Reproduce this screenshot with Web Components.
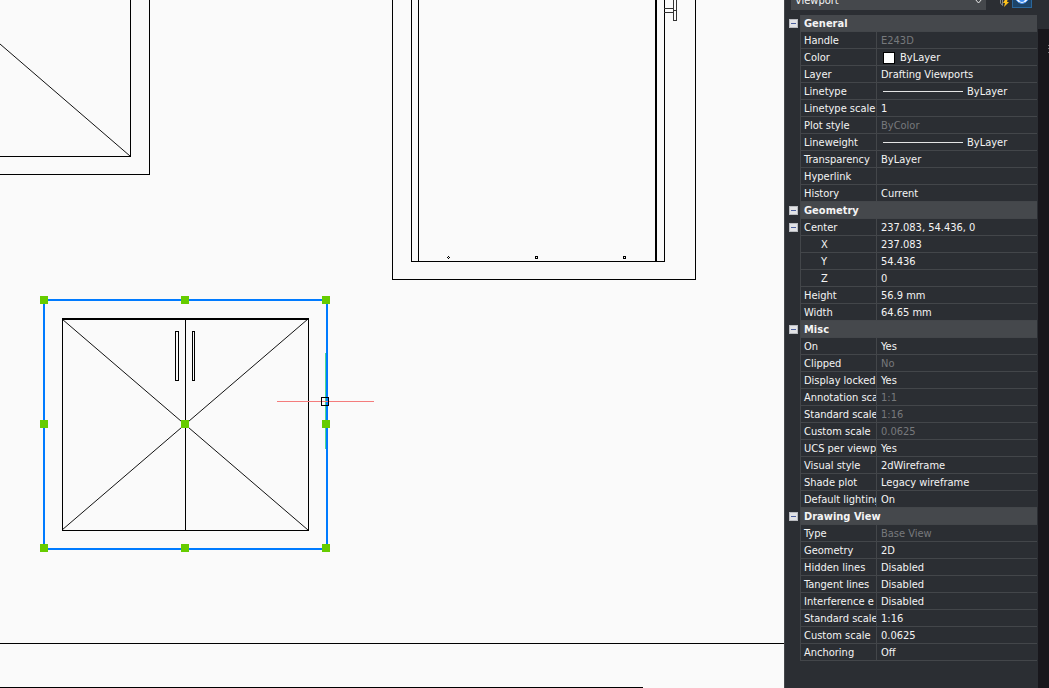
<!DOCTYPE html>
<html lang="en">
<head>
<meta charset="utf-8">
<title>Properties</title>
<style>
    html, body {
        margin: 0;
        height: 100%;
        overflow: hidden;
        background: #18171c;
    }
</style>
</head>
<body>
<cad-app>
    <cad-canvas slot="canvas"></cad-canvas>
    <prop-panel slot="panel">
        <prop-toolbar slot="toolbar"></prop-toolbar>
        <prop-section name="General"></prop-section>
        <prop-section name="Geometry"></prop-section>
        <prop-section name="Misc"></prop-section>
        <prop-section name="Drawing View"></prop-section>
    </prop-panel>
    <side-strip slot="strip"></side-strip>
</cad-app>

<script>
;(() => {
    // rows: [label, value, options]
    const sections = {
        'General': [
            ['Handle', 'E243D', {muted: true}],
            ['Color', 'ByLayer', {swatch: true}],
            ['Layer', 'Drafting Viewports'],
            ['Linetype', 'ByLayer', {line: true}],
            ['Linetype scale', '1'],
            ['Plot style', 'ByColor', {muted: true}],
            ['Lineweight', 'ByLayer', {line: true}],
            ['Transparency', 'ByLayer'],
            ['Hyperlink', ''],
            ['History', 'Current']
        ],
        'Geometry': [
            ['Center', '237.083, 54.436, 0', {toggle: true}],
            ['X', '237.083', {child: true}],
            ['Y', '54.436', {child: true}],
            ['Z', '0', {child: true}],
            ['Height', '56.9 mm'],
            ['Width', '64.65 mm']
        ],
        'Misc': [
            ['On', 'Yes'],
            ['Clipped', 'No', {muted: true}],
            ['Display locked', 'Yes'],
            ['Annotation sca', '1:1', {muted: true}],
            ['Standard scale', '1:16', {muted: true}],
            ['Custom scale', '0.0625', {muted: true}],
            ['UCS per viewp', 'Yes'],
            ['Visual style', '2dWireframe'],
            ['Shade plot', 'Legacy wireframe'],
            ['Default lighting', 'On']
        ],
        'Drawing View': [
            ['Type', 'Base View', {muted: true}],
            ['Geometry', '2D'],
            ['Hidden lines', 'Disabled'],
            ['Tangent lines', 'Disabled'],
            ['Interference e', 'Disabled'],
            ['Standard scale', '1:16'],
            ['Custom scale', '0.0625'],
            ['Anchoring', 'Off']
        ]
    };

    const define = (name, html, init) => {
        const template = document.createElement('template');
        template.innerHTML = html;

        window.customElements.define(name, class extends HTMLElement {
            constructor() {
                super();
                this.attachShadow({ mode: 'open' });
                this.shadowRoot.appendChild(template.content.cloneNode(true));
            }
            connectedCallback() {
                if (init && !this.ready) {
                    this.ready = true;
                    init(this, this.shadowRoot);
                }
            }
        });
    };

    define('cad-app', `
        <style>
            :host {
                display: grid;
                grid-template-columns: minmax(0, 1fr) 254px 11px;
                height: 100vh;
                overflow: hidden;
                font: 11px/15px "DejaVu Sans Condensed", "DejaVu Sans", sans-serif;
                color: #f4f4f4;
                --panel: #2b2e33;
                --line: #43464a;
                --head: #45484c;
                --muted: #77797c;
            }
        </style>
        <slot name="canvas"></slot>
        <slot name="panel"></slot>
        <slot name="strip"></slot>
    `);

    define('cad-canvas', `
        <style>
            :host {
                display: block;
                min-width: 0;
                overflow: hidden;
                background: #fafafa;
            }
            svg {
                display: block;
                width: 100%;
                height: 100%;
            }
            .ink { fill: none; stroke: #000; shape-rendering: crispEdges; }
            .soft { stroke: #333; }
            .diagonal { fill: none; stroke: #111; }
            .selection { fill: none; stroke: #007bff; stroke-width: 2; }
            .grips rect { fill: #66cc00; width: 8px; height: 8px; }
        </style>
        <svg role="img" aria-label="Drawing">
            <!-- window, top left -->
            <path class="ink" d="M130.5 0V156.5H0M149.5 0V174.5H0"/>
            <path class="diagonal" d="M0 44L130 156"/>

            <!-- door -->
            <g class="ink">
                <path d="M392.5 0V279.5H695.5V0"/>
                <path d="M411.5 0V261.5H664.5V0M418.5 0V261"/>
                <path d="M656 0V261" stroke-width="2"/>
                <path class="soft" d="M664 8.5H673M664 12.5H673M673.5 0V20.5H676.5V0M673 10.5H676"/>
                <path d="M447 257.5H448M449 257.5H450M448 256.5H449M448 258.5H449"/>
                <path d="M535.5 256.5H537.5V258.5H535.5ZM623.5 256.5H625.5V258.5H623.5Z"/>
            </g>

            <!-- sheet border -->
            <line class="ink" x1="0" y1="643.5" x2="100%" y2="643.5"/>
            <line class="ink" x1="0" y1="687.5" x2="643" y2="687.5"/>

            <!-- cabinet -->
            <path class="diagonal" d="M62 319L308 530M62 530L308 319"/>
            <g class="ink">
                <path d="M62.5 319V530.5H308.5V319M185.5 319V530"/>
                <path d="M62 319H309" stroke-width="2"/>
                <path d="M175.5 331.5H178.5V380.5H175.5ZM192.5 331.5H194.5V380.5H192.5Z"/>
            </g>

            <rect class="selection" x="44" y="300" width="283" height="249"/>
            <path d="M325.5 353V449" stroke="#4fd98c"/>
            <g class="grips">
                <rect x="40" y="296"/><rect x="181" y="296"/><rect x="322" y="296"/>
                <rect x="40" y="420"/><rect x="181" y="420"/><rect x="322" y="420"/>
                <rect x="40" y="544"/><rect x="181" y="544"/><rect x="322" y="544"/>
            </g>

            <!-- crosshair -->
            <path d="M277 401.5H374" stroke="#f47c7c"/>
            <rect class="ink" x="321.5" y="397.5" width="7" height="8"/>
        </svg>
    `);

    define('prop-panel', `
        <style>
            :host {
                display: flex;
                flex-direction: column;
                box-sizing: border-box;
                min-height: 0;
                overflow: hidden;
                padding-right: 1px;
                border-left: 1px solid #45484c;
                background: var(--panel);
            }
        </style>
        <slot name="toolbar"></slot>
        <slot></slot>
    `);

    define('prop-toolbar', `
        <style>
            :host {
                display: flex;
                align-items: flex-end;
                box-sizing: border-box;
                height: 15px;
                flex: none;
                padding: 0 5px 5px 6px;
                overflow: hidden;
            }
            label {
                display: grid;
                flex: 1;
                align-items: center;
                margin-right: 11px;
            }
            select, label svg { grid-area: 1 / 1; }
            select {
                appearance: none;
                height: 20px;
                padding: 0 4px;
                border: 0;
                border-radius: 0;
                background: #45484c;
                color: inherit;
                font: inherit;
            }
            label svg { justify-self: end; margin-right: 3px; pointer-events: none; }
            button {
                display: flex;
                align-items: flex-end;
                justify-content: flex-end;
                box-sizing: border-box;
                width: 15px;
                height: 20px;
                padding: 0 3px 3px 0;
                border: 0;
                background: none;
            }
            .active {
                justify-content: center;
                width: 20px;
                margin-bottom: 2px;
                padding: 0;
                border: 1px solid #2a679c;
                background: #1d4468;
            }
        </style>
        <label>
            <select aria-label="Selected object"><option>Viewport</option></select>
            <svg width="9" height="9" fill="none" stroke="#e8e8e8"><path d="M1 3L4.5 7L8 3"/></svg>
        </label>
        <button type="button" aria-label="Quick select">
            <svg width="12" height="16">
                <path d="M3.5 4V12L5.5 14.5V4" fill="none" stroke="#85888c"/>
                <path d="M9 7L6 12H8L7 16L12 11H10L11 7Z" fill="#ffc21a"/>
            </svg>
        </button>
        <button type="button" class="active" aria-label="Highlight objects">
            <svg width="16" height="17">
                <path d="M1 9Q8 1 15 9Q8 18 1 9Z" fill="#f4f8ff" stroke="#3d8df0"/>
                <circle cx="8" cy="9" r="3" fill="#3d8df0"/>
                <circle cx="8" cy="8" r="1" fill="#123a70"/>
            </svg>
        </button>
    `);

    define('tree-toggle', `
        <style>
            :host { display: block; }
            button {
                display: block;
                width: 9px;
                height: 9px;
                margin: 0 0 0 4px;
                padding: 0;
                border: 0;
                background: #e2e3e6;
            }
            svg { display: block; }
        </style>
        <button type="button" aria-expanded="true">
            <svg width="9" height="9" fill="none" shape-rendering="crispEdges">
                <path d="M.5 .5H8.5V8.5H.5Z" stroke="#b9bbc0"/>
                <path d="M2 4.5H7" stroke="#4b5f9e"/>
            </svg>
        </button>
    `, (host, root) => {
        root.querySelector('button').setAttribute('aria-label', 'Toggle ' + host.getAttribute('name'));
    });

    define('prop-section', `
        <style>
            :host { display: block; flex: none; }
            table {
                width: 100%;
                table-layout: fixed;
                border-collapse: separate;
                border-spacing: 0;
            }
            .gutter { width: 15px; }
            .label { width: 76px; }
            tr { height: 17px; }
            th, td {
                box-sizing: border-box;
                height: 17px;
                padding: 1px 0 0;
                overflow: hidden;
                white-space: nowrap;
                text-align: left;
                font-weight: normal;
                border-bottom: 1px solid var(--line);
            }
            td:first-child { padding: 0; border: 0; }
            th { padding-left: 3px; border-left: 1px solid var(--line); }
            thead th {
                background: var(--head);
                font-weight: bold;
            }
            td:last-child { padding-left: 4px; border-left: 1px solid var(--line); }
            .child { padding-left: 20px; }
            .muted { color: var(--muted); }
            .value { display: flex; align-items: center; height: 15px; }
            .swatch {
                box-sizing: border-box;
                width: 12px;
                height: 12px;
                margin: 0 5px 0 2px;
                border: 1px solid #000;
                background: #fff;
            }
            .line {
                width: 80px;
                height: 1px;
                margin: 0 4px 0 2px;
                background: #e4e4e4;
            }
        </style>
        <table>
            <colgroup><col class="gutter"><col class="label"><col></colgroup>
            <thead></thead>
            <tbody></tbody>
        </table>
    `, (host, root) => {
        const name = host.getAttribute('name');

        root.querySelector('thead').innerHTML = `
            <tr><td><tree-toggle name="${name}"></tree-toggle></td><th colspan="2">${name}</th></tr>
        `;

        root.querySelector('tbody').innerHTML = sections[name].map(([label, value, opt = {}]) => `
            <tr>
                <td>${opt.toggle ? `<tree-toggle name="${label}"></tree-toggle>` : ''}</td>
                <th scope="row" class="${opt.child ? 'child' : ''}">${label}</th>
                <td class="${opt.muted ? 'muted' : ''}"><div class="value">${opt.swatch ? '<span class="swatch"></span>' : ''}${opt.line ? '<span class="line"></span>' : ''}<span>${value}</span></div></td>
            </tr>
        `).join('');
    });

    define('side-strip', `
        <style>
            :host {
                display: flex;
                flex-direction: column;
                background: #18171c;
            }
            .cap { height: 29px; background: var(--panel); }
            svg { display: block; align-self: flex-end; }
        </style>
        <div class="cap"></div>
        <svg width="1" height="30" stroke="#77797c"><path d="M.5 16V17M.5 19V20M.5 23V24"/></svg>
    `);
})();
</script>
</body>
</html>
